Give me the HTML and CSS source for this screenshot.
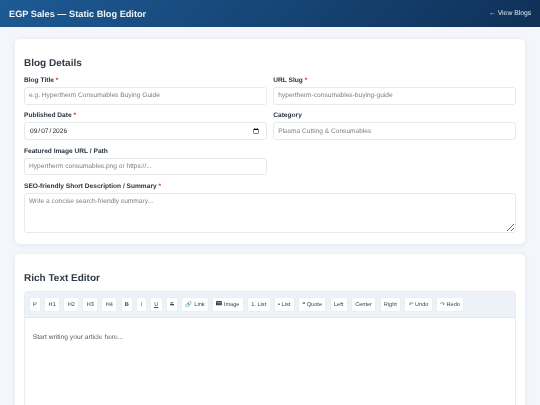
FILE: index.html
```html
<!DOCTYPE html>
<html lang="en">
<head>
<meta charset="utf-8">
<title>EGP Sales — Static Blog Editor</title>
<link rel="stylesheet" href="styles.css">
</head>
<body>
<header class="topbar">
  <h1>EGP Sales — Static Blog Editor</h1>
  <a class="back" href="#">← View Blogs</a>
</header>
<main class="page">
  <section class="card details">
    <h2>Blog Details</h2>
    <div class="grid">
      <div class="field"><label>Blog Title <span class="req">*</span></label><input type="text" placeholder="e.g. Hypertherm Consumables Buying Guide"></div>
      <div class="field"><label>URL Slug <span class="req">*</span></label><input type="text" placeholder="hypertherm-consumables-buying-guide"></div>
      <div class="field"><label>Published Date <span class="req">*</span></label><input type="date" value="2026-09-07"></div>
      <div class="field"><label>Category</label><input type="text" placeholder="Plasma Cutting &amp; Consumables"></div>
      <div class="field"><label>Featured Image URL / Path</label><input type="text" placeholder="Hypertherm consumables.png or https://..."></div>
      <div class="field wide"><label>SEO-friendly Short Description / Summary <span class="req">*</span></label><textarea placeholder="Write a concise search-friendly summary..."></textarea></div>
    </div>
  </section>
  <section class="card editor-card">
    <h2>Rich Text Editor</h2>
    <div class="toolbar">
      <button>P</button><button>H1</button><button>H2</button><button>H3</button><button>H4</button>
      <button class="b">B</button><button class="i">I</button><button class="u">U</button><button class="s">S</button>
      <button><span class="link-ico">🔗</span> Link</button>
      <button><svg class="img-ico" viewBox="0 0 12 9" aria-hidden="true"><rect width="12" height="9" rx="1" fill="#2b2f36"/><rect x="1.5" y="1.5" width="9" height="3.5" fill="#8b929c"/><path d="M1.5 7.5 5 5h5.5v2.5z" fill="#555b64"/></svg>Image</button>
      <button>1. List</button><button>• List</button><button>❝ Quote</button>
      <button>Left</button><button>Center</button><button>Right</button><button>↶ Undo</button><button>↷ Redo</button>
    </div>
    <div class="editor">Start writing your article here...</div>
  </section>
</main>
</body>
</html>
```
FILE: styles.css
```css
* { box-sizing: border-box; }
html, body { margin: 0; height: 405px; overflow: hidden; }
body { background: #f4f6fb; font-family: "Liberation Sans", Arial, sans-serif; color: #1f2937; text-rendering: geometricPrecision; }
input, textarea, button { text-rendering: geometricPrecision; }
.topbar { height: 27px; display: flex; align-items: center; justify-content: space-between; padding: 0 8.5px; background: linear-gradient(135deg, #1d5a94, #0f3057); color: #fff; }
.topbar h1 { margin: 0; font-size: 9.2px; font-weight: 700; color: #eef3f8; will-change: transform; }
.back { font-size: 6.8px; color: #dbe5ee; text-decoration: none; will-change: transform; }
.page { padding: 12px 15px 0; display: flex; flex-direction: column; gap: 10px; will-change: transform; }
.card { background: #fff; border-radius: 5px; padding: 18px 9px 9px; box-shadow: 0 1px 6px rgba(30, 50, 90, 0.08); }
.details { height: 205px; }
h2 { margin: 0 0 6px; font-size: 10px; line-height: 14px; font-weight: 700; color: #2f3a46; }
.editor-card h2 { margin-bottom: 5px; }
.grid { display: grid; grid-template-columns: 1fr 1fr; column-gap: 6.5px; row-gap: 7.83px; }
.field { display: flex; flex-direction: column; min-width: 0; }
.wide { grid-column: 1 / -1; }
label { font-size: 6.6px; line-height: 8px; font-weight: 700; color: #2a3440; margin-bottom: 2px; }
.req { color: #d43a3a; }
input, textarea { width: 100%; height: 17.5px; padding: 0 4px; border: 1px solid #e6e9ee; border-radius: 3px; background: #fff; font-family: inherit; font-size: 6.6px; color: #222; outline: none; }
textarea { height: 40px; padding: 4.5px 4px; display: block; resize: vertical; }
::placeholder { color: #808080; opacity: 1; }
.editor-card { height: 300px; }
.toolbar { height: 27px; display: flex; align-items: center; gap: 3.3px; padding: 0 3.7px; background: #edf2f8; border: 1px solid #e9edf3; border-bottom-color: #e3e8ef; border-radius: 4px 4px 0 0; }
.toolbar button { height: 15.5px; padding: 0 3.3px; background: #fff; border: 1px solid #eaedf2; border-radius: 2.5px; font-family: inherit; font-size: 5.6px; color: #3b4450; white-space: nowrap; }
.toolbar .b { font-weight: 700; }
.toolbar .i { font-style: italic; }
.toolbar .u { text-decoration: underline; }
.toolbar .s { text-decoration: line-through; }
.link-ico { color: #8ea6be; }
.img-ico { width: 5.8px; height: 4.4px; margin-right: 1.6px; vertical-align: 0.3px; }
.editor { height: 200px; padding: 15px 7.7px; background: #fff; border: 1px solid #e9edf3; border-top: 0; font-size: 6.7px; line-height: 9px; color: #555b64; }
```
